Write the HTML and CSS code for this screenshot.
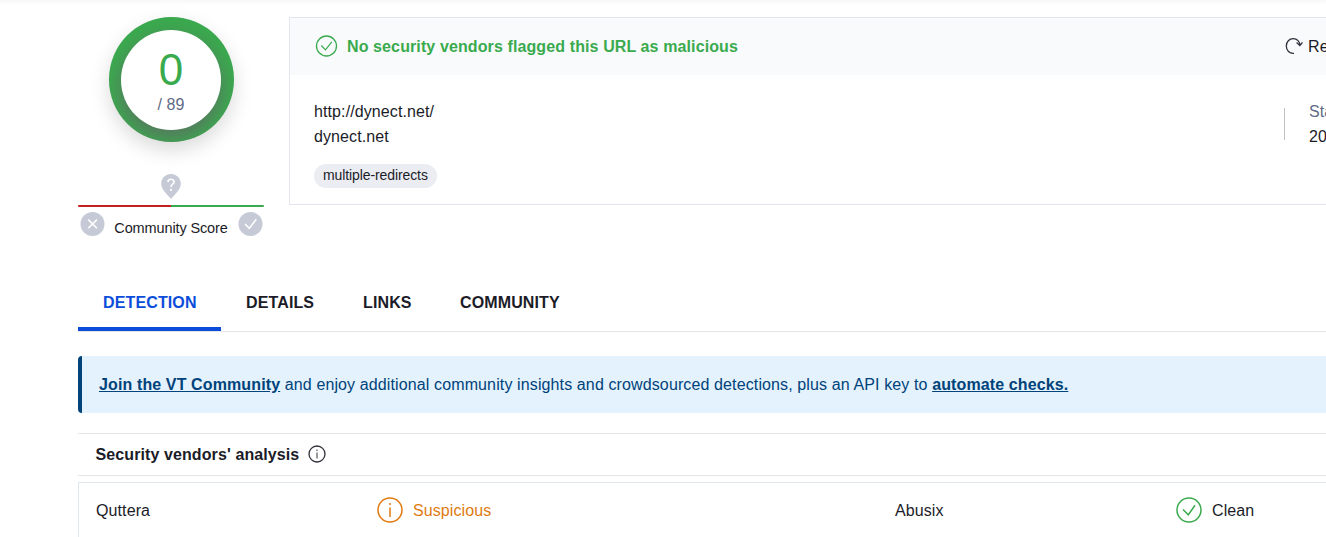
FILE: index.html
```html
<!DOCTYPE html>
<html lang="en">
<head>
<meta charset="utf-8">
<title>dynect.net</title>
<link rel="stylesheet" href="styles.css">
</head>
<body>
<div class="page">
  <section class="summary">
    <aside class="score">
      <div class="dial">
        <div class="dial-face"><span class="dial-value">0</span><span class="dial-total">/ 89</span></div>
      </div>
      <svg class="pin" width="20" height="25" viewBox="0 0 20 25"><path d="M10 0C4.4 0 .2 4.300 .2 9.700C.2 15.500 5.500 19.500 10 25C14.500 19.500 19.800 15.500 19.800 9.700C19.800 4.300 15.600 0 10 0Z" fill="#c6cad6"/><path d="M7 8C7 4.400 13 4.300 13 7.900C13 10.200 10 10.300 10 13M10 14.800V16.900" fill="none" stroke="#fff" stroke-width="1.700"/></svg>
      <div class="bar"></div>
      <div class="votes">
        <svg width="25" height="26" viewBox="0 0 25 26"><circle cx="12.500" cy="13" r="12" fill="#c6cad6"/><path d="M8.300 8.600L16.900 17.200M16.900 8.600L8.300 17.200" stroke="#fff" stroke-width="1.500"/></svg>
        <span class="votes-label">Community Score</span>
        <svg width="25" height="26" viewBox="0 0 25 26"><circle cx="12.500" cy="13" r="12" fill="#c6cad6"/><path d="M7 13L11.300 17.300L18.300 8.300" fill="none" stroke="#fff" stroke-width="1.500"/></svg>
      </div>
    </aside>
    <div class="card">
      <header class="card-head">
        <svg class="lift" width="23" height="22" viewBox="0 0 23 22" fill="none" stroke="#3aaa4e"><circle cx="11.500" cy="11" r="10" stroke-width="1.300"/><path d="M6.300 10.500L10.500 14.800L16.800 6.800" stroke-width="1.200"/></svg>
        <span class="verdict">No security vendors flagged this URL as malicious</span>
        <span class="action"><svg class="lift" width="18" height="18" viewBox="0 0 18 18" fill="none" stroke="#30313c" stroke-width="1.300"><path d="M9 16.300C4.500 16.700 1.300 13.300 1.300 9C1.300 4.800 4.300 1.700 8.200 1.700C12.200 1.700 14.900 4.600 14.900 8.400M11.600 5.500L14.900 8.600L17.500 5.300"/></svg>Reanalyze</span>
      </header>
      <div class="card-body">
        <div class="target">
          <div>http://dynect.net/</div>
          <div>dynect.net</div>
          <span class="tag">multiple-redirects</span>
        </div>
        <div class="divider"></div>
        <div class="status"><div class="muted">Status</div><div>200</div></div>
      </div>
    </div>
  </section>
  <nav class="tabs">
    <a class="tab active">DETECTION</a><a class="tab details">DETAILS</a><a class="tab links">LINKS</a><a class="tab community">COMMUNITY</a>
  </nav>
  <div class="banner"><p><b>Join the VT Community</b> and enjoy additional community insights and crowdsourced detections, plus an API key to <b>automate checks.</b></p></div>
  <div class="analysis">
    <span>Security vendors' analysis</span>
    <svg class="lift" width="18" height="18" viewBox="0 0 18 18" fill="none" stroke="#30313c"><circle cx="9" cy="9" r="8" stroke-width="1.300"/><path d="M9 7.500V13.500M9 4.500V6"/></svg>
  </div>
  <div class="results">
    <span class="vendor">Quttera</span>
    <span class="result suspicious"><svg class="lift" width="26" height="26" viewBox="0 0 26 26" fill="none" stroke="#e07a10" stroke-width="1.500"><circle cx="13" cy="13" r="12"/><path d="M13 10.500V20M13 6V8"/></svg>Suspicious</span>
    <span class="vendor">Abusix</span>
    <span class="result"><svg class="lift" width="26" height="26" viewBox="0 0 26 26" fill="none" stroke="#3aaa4e" stroke-width="1.500"><circle cx="13" cy="13" r="12"/><path d="M7 12.500L12.300 17.800L19 8.300"/></svg>Clean</span>
  </div>
</div>
</body>
</html>
```
FILE: styles.css
```css
* { box-sizing: border-box; }
body {
  margin: 0;
  height: 537px;
  overflow: hidden;
  background: linear-gradient(#f8f8f8, #fff 5px);
  color: #1b1c28;
  font: 16px/25px "Liberation Sans", Arial, sans-serif;
  letter-spacing: .1px;
}
svg { display: block; flex: none; }
.lift { margin-bottom: 1px; }
.page { padding: 17px 0 0 78px; height: 537px; overflow: hidden; }
.summary { display: flex; gap: 25px; height: 257px; align-items: flex-start; }
.score { width: 186px; flex: none; display: flex; flex-direction: column; align-items: center; }
.dial {
  width: 125px; height: 125px; padding: 12.500px;
  border-radius: 50%; background: #3aaa4e;
  box-shadow: 0 8px 20px rgba(0, 0, 0, .15);
  overflow: hidden;
}
.dial-face {
  width: 100px; height: 100px; border-radius: 50%; background: #fff;
  box-shadow: 0 8px 20px rgba(110, 80, 110, .62);
  display: flex; flex-direction: column; align-items: center;
}
.dial-value { color: #3aaa4e; font-size: 44px; line-height: 50px; margin-top: 15px; }
.dial-total { color: #606b85; line-height: 20px; }
.pin { margin-top: 32px; }
.bar { margin-top: 6px; width: 186px; height: 2px; border-radius: 1px; background: linear-gradient(90deg, #c3201f 50%, #3aaa4e 50%); }
.votes { margin-top: 4px; width: 183px; display: flex; justify-content: space-between; }
.votes-label { font-size: 14.500px; letter-spacing: -.12px; line-height: 26px; padding-top: 4px; white-space: nowrap; }
.card { flex: 1; height: 188px; border: 1px solid #e3e6ed; border-right: 0; overflow: hidden; }
.card-head { height: 57px; padding-left: 25px; display: flex; align-items: center; background: #f9fafc; white-space: nowrap; }
.verdict { margin-left: 9px; color: #3aaa4e; font-weight: bold; flex: 1; letter-spacing: .11px; }
.action { width: 41px; display: flex; align-items: center; gap: 5px; }
.card-body { display: flex; padding: 24px 0 0 24px; }
.target { flex: 1; }
.tag { display: inline-block; margin-top: 15px; padding: 0 9px; height: 24px; line-height: 22px; border-radius: 12px; background: #ebedf3; font-size: 14px; letter-spacing: -.1px; }
.divider { width: 1px; height: 32px; margin-top: 9px; background: #c1c1c1; }
.status { width: 41px; padding-left: 24px; white-space: nowrap; }
.muted { color: #606b85; }
.tabs { display: flex; height: 58px; border-bottom: 1px solid #e5e6e8; font-weight: bold; letter-spacing: .13px; }
.tab { height: 57px; padding: 0 24px 0 25px; line-height: 57px; }
.active { width: 143px; color: #0b4dda; border-bottom: 4px solid #0b4dda; }
.details { width: 117px; }
.links { width: 97px; }
.banner { margin-top: 24px; height: 57px; padding-left: 17px; border-left: 4px solid #00427a; border-radius: 4px 0 0 4px; background: #e3f2fd; color: #00427a; line-height: 57px; white-space: nowrap; letter-spacing: .12px; }
.banner p { margin: 0; }
.banner b { text-decoration: underline; }
.analysis { margin-top: 20px; height: 43px; padding-left: 17.500px; border: solid #e5e6e8; border-width: 1px 0; display: flex; align-items: center; gap: 9px; font-weight: bold; }
.results { margin-top: 6px; height: 60px; padding: 0 0 4px 17px; border: solid #e1e7ef; border-width: 1px 0 0 1px; display: grid; grid-template-columns: 281px 518px 281px 1fr; align-items: center; }
.result { display: flex; align-items: center; gap: 10px; }
.suspicious { color: #e07a10; }
```
